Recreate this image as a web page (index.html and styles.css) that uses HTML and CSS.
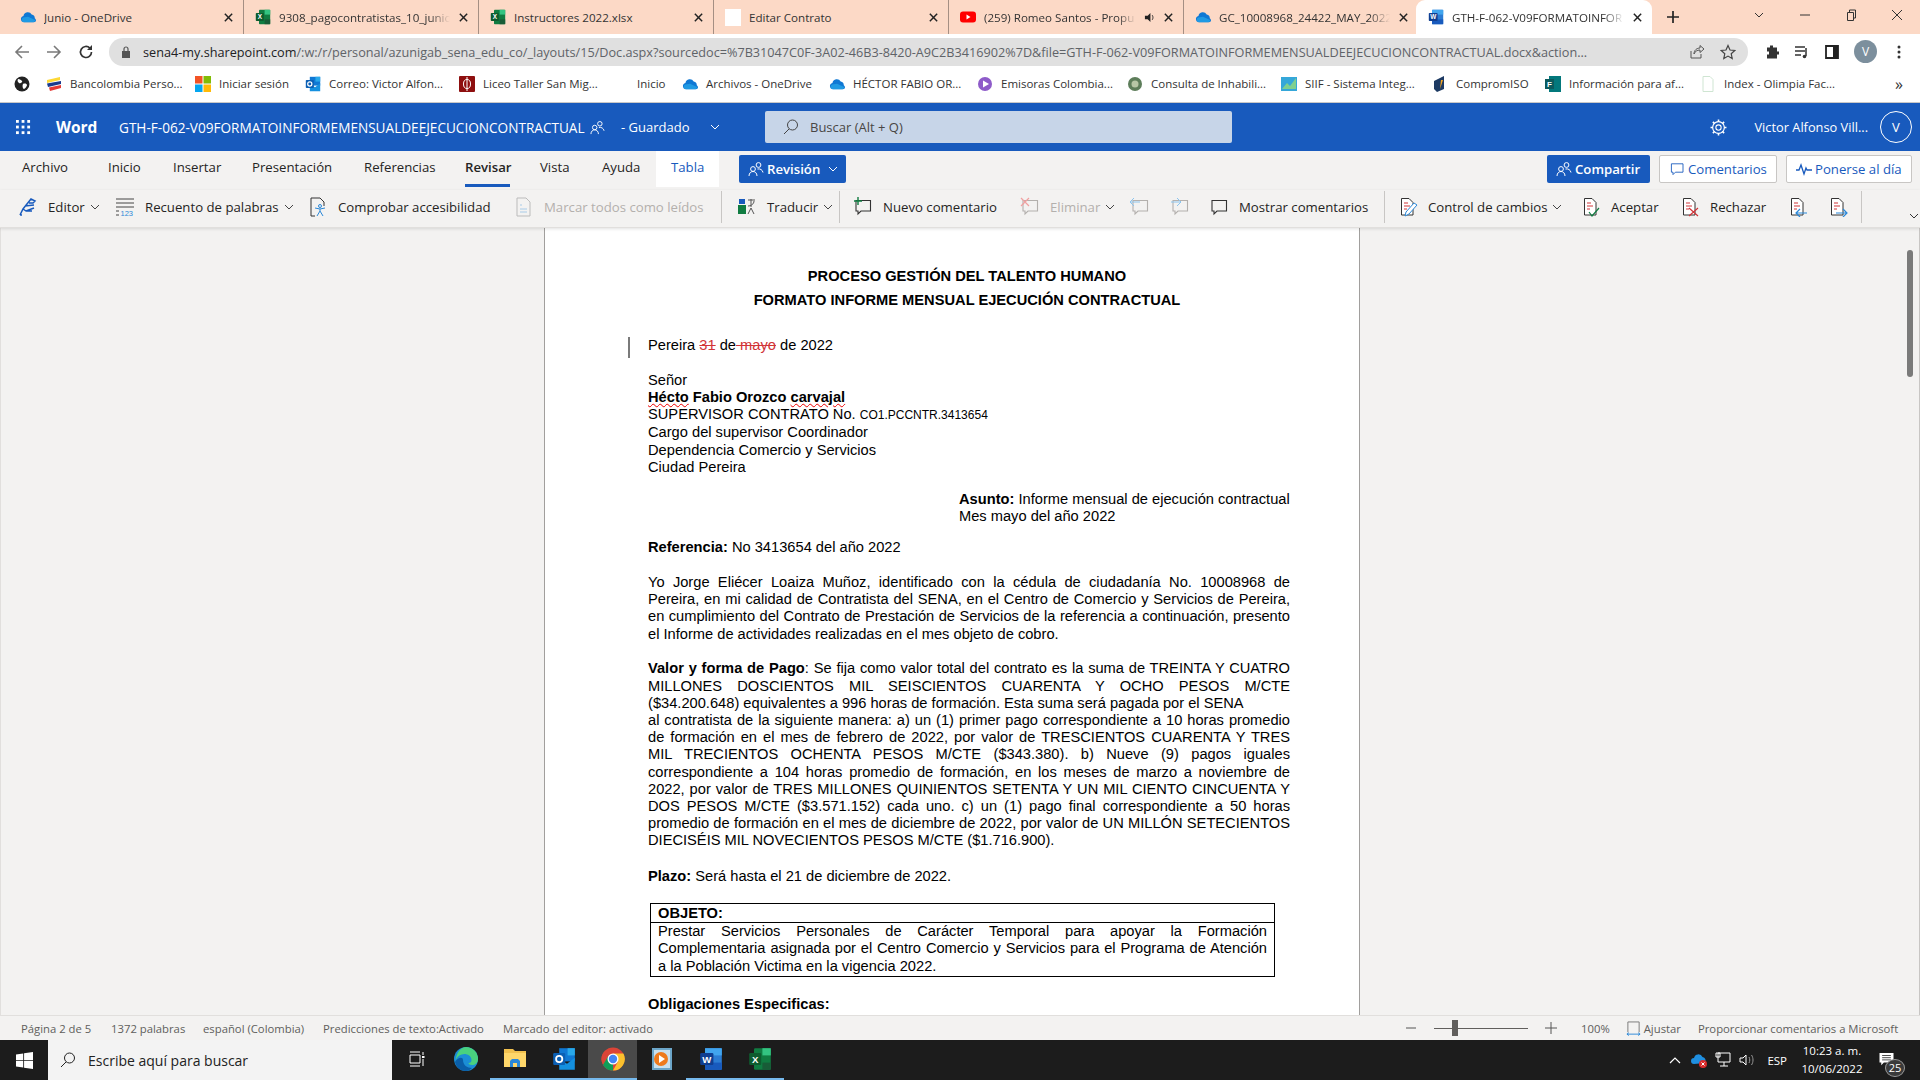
FILE: index.html
```html
<!DOCTYPE html>
<html lang="es">
<head>
    <meta charset="UTF-8">
    <title>GTH-F-062-V09FORMATOINFORMEMENSUALDEEJECUCIONCONTRACTUAL.docx</title>
    <link rel="stylesheet" href="styles.css">
</head>
<body>
    <svg class="defs" xmlns="http://www.w3.org/2000/svg">
        <symbol id="cloud" viewBox="0 0 20 20"><path fill="#0f78d4" d="M5 16.5a4 4 0 0 1-.7-7.9 5.5 5.5 0 0 1 10.3-1.6 4.6 4.6 0 0 1 3.9 4.6c1 .8 1.5 1.7 1.5 2.5 0 1.4-1.1 2.4-2.6 2.4z"/><path fill="#28a8ea" d="M5 16.5a3 3 0 0 1-1-5.8l6-1 9 4c0 1.6-1 2.8-2.6 2.8z" opacity=".7"/></symbol>
        <symbol id="excel" viewBox="0 0 20 20"><rect x="5" y="1" width="14" height="18" rx="1" fill="#107c41"/><rect x="12" y="1" width="7" height="6" fill="#33c481"/><rect x="12" y="13" width="7" height="6" fill="#185c37"/><rect x="1" y="5" width="10" height="10" rx="1" fill="#0e5c2f"/><text x="6" y="13" class="logo-letter">X</text></symbol>
        <symbol id="word" viewBox="0 0 20 20"><rect x="5" y="1" width="14" height="18" rx="1" fill="#2b7cd3"/><rect x="5" y="1" width="14" height="6" fill="#41a5ee"/><rect x="5" y="13" width="14" height="6" fill="#185abd"/><rect x="1" y="5" width="11" height="10" rx="1" fill="#103f91"/><text x="6.5" y="13" class="logo-letter">W</text></symbol>
        <symbol id="outlook" viewBox="0 0 20 20"><rect x="6" y="1" width="13" height="11" fill="#0f78d4"/><rect x="13" y="1" width="6" height="6" fill="#28a8ea"/><path fill="#1490df" d="M6 10l6.5 4L19 9v10H6z"/><rect x="1" y="5" width="10" height="10" rx="1" fill="#0a5fb4"/><circle cx="6" cy="10" r="2.6" fill="none" stroke="#fff" stroke-width="1.5"/></symbol>
        <symbol id="close" viewBox="0 0 12 12"><path d="M2 2l8 8M10 2l-8 8" stroke="#222" stroke-width="1.6" fill="none"/></symbol>
        <symbol id="chev" viewBox="0 0 12 12"><path d="M2 4l4 4 4-4" stroke="currentColor" stroke-width="1" fill="none"/></symbol>
        <symbol id="bubble" viewBox="0 0 20 20"><path d="M3 3.5h14.5v10.5H8l-3 3v-3H3z" fill="none" stroke="currentColor" stroke-width="1.1"/></symbol>
        <symbol id="people" viewBox="0 0 16 16"><circle cx="5" cy="8" r="2.4" fill="none" stroke="currentColor"/><path d="M1 15c0-3 2-4.500 4-4.500s4 1.500 4 4.500" fill="none" stroke="currentColor"/><circle cx="10.500" cy="4" r="2.400" fill="none" stroke="currentColor"/><path d="M9.500 8c2.500-.6 5 .8 5.500 3.500" fill="none" stroke="currentColor"/></symbol>
        <symbol id="page" viewBox="0 0 20 20"><path d="M3.500 1.500h7.500l4 4v12.500H3.500z" fill="#fff" stroke="#333" stroke-width="1"/><path d="M6 6h4M6 9h6M6 12h3" stroke="#d13438" stroke-width="1"/></symbol>
    </svg>

    <!-- chrome tabs -->
    <div class="tabstrip">
        <div class="tab"><svg class="ico16"><use href="#cloud"/></svg><span class="tab-name">Junio - OneDrive</span><svg class="tab-x"><use href="#close"/></svg></div>
        <div class="tab"><svg class="ico16"><use href="#excel"/></svg><span class="tab-name fade">9308_pagocontratistas_10_junio_</span><svg class="tab-x"><use href="#close"/></svg></div>
        <div class="tab"><svg class="ico16"><use href="#excel"/></svg><span class="tab-name">Instructores 2022.xlsx</span><svg class="tab-x"><use href="#close"/></svg></div>
        <div class="tab"><span class="blank-favicon"></span><span class="tab-name">Editar Contrato</span><svg class="tab-x"><use href="#close"/></svg></div>
        <div class="tab">
            <svg class="ico16" viewBox="0 0 16 16"><rect x="0" y="2.500" width="16" height="11" rx="3" fill="#f00"/><path d="M6.500 5.500l4 2.500-4 2.500z" fill="#fff"/></svg>
            <span class="tab-name fade">(259) Romeo Santos - Propu</span>
            <svg class="audio" viewBox="0 0 12 12"><path d="M1 4h3l3-3v10L4 8H1z" fill="#222"/><path d="M9 3.500c1 1.500 1 3.500 0 5" stroke="#222" fill="none"/></svg>
            <svg class="tab-x"><use href="#close"/></svg>
        </div>
        <div class="tab"><svg class="ico16"><use href="#cloud"/></svg><span class="tab-name fade">GC_10008968_24422_MAY_2022</span><svg class="tab-x"><use href="#close"/></svg></div>
        <div class="tab active"><svg class="ico16"><use href="#word"/></svg><span class="tab-name fade">GTH-F-062-V09FORMATOINFOR</span><svg class="tab-x"><use href="#close"/></svg></div>
        <svg class="new-tab" viewBox="0 0 14 14"><path d="M7 1v12M1 7h12" stroke="#222" stroke-width="1.700"/></svg>
        <div class="window-btns">
            <svg viewBox="0 0 12 12"><path d="M2 4l4 4 4-4" stroke="#333" fill="none"/></svg>
            <svg viewBox="0 0 12 12"><path d="M1 6h10" stroke="#333"/></svg>
            <svg viewBox="0 0 12 12"><path d="M2.500 3.500h6v8h-6zM4.500 3.500v-2.500h6v8h-2" fill="none" stroke="#333"/></svg>
            <svg viewBox="0 0 12 12"><path d="M1 1l10 10M11 1l-10 10" stroke="#333"/></svg>
        </div>
    </div>

    <!-- address bar -->
    <div class="addressbar">
        <svg class="nav" viewBox="0 0 16 16"><path d="M15 8H2M8 2L2 8l6 6" fill="none" stroke="#7a7a7a" stroke-width="1.600"/></svg>
        <svg class="nav" viewBox="0 0 16 16"><path d="M1 8h13M8 2l6 6-6 6" fill="none" stroke="#7a7a7a" stroke-width="1.600"/></svg>
        <svg class="nav" viewBox="0 0 16 16"><path d="M13.500 8a5.500 5.500 0 1 1-1.600-3.900" fill="none" stroke="#333" stroke-width="1.700"/><path d="M14 1v5H9z" fill="#333"/></svg>
        <div class="omnibox">
            <svg class="lock" viewBox="0 0 10 12"><path d="M1 5h8v7H1z" fill="#555"/><path d="M3 5V3a2 2 0 0 1 4 0v2" fill="none" stroke="#555" stroke-width="1.200"/></svg>
            <span class="url"><b>sena4-my.sharepoint.com</b>/:w:/r/personal/azunigab_sena_edu_co/_layouts/15/Doc.aspx?sourcedoc=%7B31047C0F-3A02-46B3-8420-A9C2B3416902%7D&amp;file=GTH-F-062-V09FORMATOINFORMEMENSUALDEEJECUCIONCONTRACTUAL.docx&amp;action...</span>
            <svg class="omni-ico" viewBox="0 0 16 16"><path d="M3 7v7h10v-4M6 10c0-4 3-6 6-6V1.500L16 5l-4 3.500V6c-3 0-5 1.500-6 4z" fill="none" stroke="#555"/></svg>
            <svg class="omni-ico" viewBox="0 0 16 16"><path d="M8 1.500l2 4.500 4.800.5-3.600 3.200 1 4.800L8 12.100 3.800 14.500l1-4.800L1.200 6.500 6 6z" fill="none" stroke="#444" stroke-width="1.200"/></svg>
        </div>
        <div class="ext-icons">
            <svg viewBox="0 0 16 16"><path d="M6 1.500h3v2h4v4h2v3h-2v4H3v-4h2v-3H3v-4h3z" fill="#333"/></svg>
            <svg viewBox="0 0 16 16"><path d="M1 3h10M1 7h10M1 11h6M12 4v8" stroke="#333" stroke-width="1.500" fill="none"/><circle cx="10.500" cy="12.500" r="1.800" fill="#333"/></svg>
            <svg viewBox="0 0 16 16"><path d="M2 2h12v12H2z" fill="none" stroke="#222" stroke-width="1.800"/><path d="M9 2h5v12H9z" fill="#222"/></svg>
            <span class="avatar-v">V</span>
            <svg viewBox="0 0 16 16"><circle cx="8" cy="3" r="1.500" fill="#333"/><circle cx="8" cy="8" r="1.500" fill="#333"/><circle cx="8" cy="13" r="1.500" fill="#333"/></svg>
        </div>
    </div>

    <!-- bookmarks -->
    <div class="bookmarks">
        <div class="bm"><svg class="ico16" viewBox="0 0 16 16"><circle cx="8" cy="8" r="7.500" fill="#222"/><path d="M4 3c2 0 3 1 4 2S6 8 5 7 3 5 4 3zM9 8c2-1 4 0 4 1s-2 4-3 4-2-3-1-5z" fill="#fff"/></svg></div>
        <div class="bm"><svg class="ico16" viewBox="0 0 16 16"><path d="M1 4l13-3v3L1 7z" fill="#fdd835"/><path d="M1 7.500L15 5v3L2 11z" fill="#1a3b8e"/><path d="M3 11.500L15 9v3L4 15z" fill="#e53935"/></svg><span>Bancolombia Perso...</span></div>
        <div class="bm"><svg class="ico16" viewBox="0 0 16 16"><rect width="7.500" height="7.500" fill="#f35325"/><rect x="8.500" width="7.500" height="7.500" fill="#81bc06"/><rect y="8.500" width="7.500" height="7.500" fill="#05a6f0"/><rect x="8.500" y="8.500" width="7.500" height="7.500" fill="#ffba08"/></svg><span>Iniciar sesión</span></div>
        <div class="bm"><svg class="ico16"><use href="#outlook"/></svg><span>Correo: Victor Alfon...</span></div>
        <div class="bm"><svg class="ico16" viewBox="0 0 16 16"><rect width="16" height="16" rx="1" fill="#8e0f0f"/><ellipse cx="8" cy="8" rx="3.500" ry="4.500" fill="none" stroke="#fff"/><path d="M8 1v14" stroke="#fff"/></svg><span>Liceo Taller San Mig...</span></div>
        <div class="bm"><span>Inicio</span></div>
        <div class="bm"><svg class="ico16"><use href="#cloud"/></svg><span>Archivos - OneDrive</span></div>
        <div class="bm"><svg class="ico16"><use href="#cloud"/></svg><span>HÉCTOR FABIO OR...</span></div>
        <div class="bm"><svg class="ico16" viewBox="0 0 16 16"><circle cx="8" cy="8" r="7" fill="#8e5bc9"/><path d="M6 4.500l6 3.500-6 3.500z" fill="#fff"/></svg><span>Emisoras Colombia...</span></div>
        <div class="bm"><svg class="ico16" viewBox="0 0 16 16"><circle cx="8" cy="8" r="7" fill="#5d7d5a"/><circle cx="8" cy="8" r="3.500" fill="#b7c6a6"/></svg><span>Consulta de Inhabili...</span></div>
        <div class="bm"><svg class="ico16" viewBox="0 0 16 16"><rect y="1" width="16" height="14" fill="#35a7d9"/><path d="M1 13l5-6 3 3 6-8v11H1z" fill="#7fd08f"/></svg><span>SIIF - Sistema Integ...</span></div>
        <div class="bm"><svg class="ico16" viewBox="0 0 16 16"><path d="M2 5l10-5v13l-7 3-3-3z" fill="#1d3a63"/><path d="M9 4l2 0-3 9z" fill="#f5a623"/></svg><span>CompromISO</span></div>
        <div class="bm"><svg class="ico16" viewBox="0 0 16 16"><rect x="4" width="12" height="16" fill="#03787c"/><rect y="3" width="9" height="10" fill="#0b5a5d"/><text x="4.500" y="11" class="logo-letter">F</text></svg><span>Información para af...</span></div>
        <div class="bm"><svg class="ico16" viewBox="0 0 16 16"><path d="M3 .500h7l3 3v12H3z" fill="#fff" stroke="#cfe5d2"/></svg><span>Index - Olimpia Fac...</span></div>
        <div class="bm more">»</div>
    </div>

    <!-- word online header -->
    <header class="appbar">
        <div class="appbar-left">
            <svg class="waffle" viewBox="0 0 16 16"><g fill="#fff"><rect x="0" y="0" width="3" height="3"/><rect x="6" y="0" width="3" height="3"/><rect x="12" y="0" width="3" height="3"/><rect x="0" y="6" width="3" height="3"/><rect x="6" y="6" width="3" height="3"/><rect x="12" y="6" width="3" height="3"/><rect x="0" y="12" width="3" height="3"/><rect x="6" y="12" width="3" height="3"/><rect x="12" y="12" width="3" height="3"/></g></svg>
            <span class="app-name">Word</span>
            <span class="doc-name">GTH-F-062-V09FORMATOINFORMEMENSUALDEEJECUCIONCONTRACTUAL</span>
            <svg class="people-ico"><use href="#people"/></svg>
            <span class="saved">- Guardado</span>
            <svg class="saved-chev"><use href="#chev"/></svg>
        </div>
        <div class="searchbox">
            <svg viewBox="0 0 16 16"><circle cx="9.500" cy="6" r="5" fill="none" stroke="#444"/><path d="M6 10l-5 5" stroke="#444"/></svg>
            <span>Buscar (Alt + Q)</span>
        </div>
        <div class="appbar-right">
            <svg class="gear" viewBox="0 0 16 16"><circle cx="8" cy="8" r="2.500" fill="none" stroke="#fff"/><circle cx="8" cy="8" r="5.500" fill="none" stroke="#fff" stroke-width="1.100"/><path d="M8 .500v2.300M8 13.200v2.300M.500 8h2.300M13.200 8h2.300M2.700 2.700l1.600 1.600M11.700 11.700l1.600 1.600M13.300 2.700l-1.600 1.600M4.300 11.700l-1.600 1.600" stroke="#fff" stroke-width="1.500"/></svg>
            <span class="user-name">Victor Alfonso Vill...</span>
            <span class="user-circle">V</span>
        </div>
    </header>

    <!-- ribbon -->
    <div class="ribbon-tabs">
        <nav class="tabs-grid">
            <span>Archivo</span>
            <span>Inicio</span>
            <span>Insertar</span>
            <span>Presentación</span>
            <span>Referencias</span>
            <span class="current">Revisar</span>
            <span>Vista</span>
            <span>Ayuda</span>
            <span class="context">Tabla</span>
            <button class="revision"><svg class="ico16"><use href="#people"/></svg>Revisión<svg class="btn-chev"><use href="#chev"/></svg></button>
        </nav>
        <div class="ribbon-actions">
            <button class="primary"><svg class="ico16"><use href="#people"/></svg>Compartir</button>
            <button class="outline"><svg class="ico16"><use href="#bubble"/></svg>Comentarios</button>
            <button class="outline"><svg class="ico16" viewBox="0 0 16 16"><path d="M0 9h3l2-5 3 9 2-6 1 2h5" fill="none" stroke="#185abd" stroke-width="1.300"/></svg>Ponerse al día</button>
        </div>
    </div>
    <div class="toolbar">
        <div class="tool"><svg viewBox="0 0 20 20"><path d="M2 18l3-6 8-10 4 2-2 2h-4M5 12l3 2 8-3M7 9l9-1M8 14l6 0M2 18h2" fill="none" stroke="#185abd" stroke-width="1.500"/></svg><span>Editor</span><svg class="caret"><use href="#chev"/></svg></div>
        <div class="tool"><svg viewBox="0 0 20 20"><path d="M1 2h18M1 6h18M1 10h18M1 14h3M1 18h3" stroke="#444"/><text x="5.500" y="18.500" class="num-mark">123</text></svg><span>Recuento de palabras</span><svg class="caret"><use href="#chev"/></svg></div>
        <div class="tool"><svg viewBox="0 0 20 20"><path d="M3 1h9l4 4v4M3 1v18h4" fill="none" stroke="#333"/><circle cx="12" cy="9" r="1.500" fill="none" stroke="#2b88d8"/><path d="M7 11l5 1 5-1M12 12v2l-3 5M12 14l3 5" fill="none" stroke="#2b88d8"/></svg><span>Comprobar accesibilidad</span></div>
        <div class="tool off"><svg viewBox="0 0 20 20"><path d="M3 1h9l4 4v14H3z" fill="none" stroke="#bbb"/><path d="M6 8h2M6 12h7M6 15h7" stroke="#a8cbe8"/></svg><span>Marcar todos como leídos</span></div>
        <span class="sep"></span>
        <div class="tool"><svg viewBox="0 0 20 20"><rect x="1" y="8" width="8" height="9" fill="#107c41"/><rect x="2" y="2" width="6" height="5" fill="#185abd"/><path d="M11 3h7M14 2v8M11 9c3 0 6-2 6-5M11 17l3-6 3 6" fill="none" stroke="#555"/></svg><span>Traducir</span><svg class="caret"><use href="#chev"/></svg></div>
        <span class="sep"></span>
        <div class="tool"><svg viewBox="0 0 20 20"><use href="#bubble"/><path d="M1 4h8M5 0v8" stroke="#107c41" stroke-width="1.400"/></svg><span>Nuevo comentario</span></div>
        <div class="tool off"><svg viewBox="0 0 20 20"><use href="#bubble"/><path d="M1 1l8 8M9 1l-8 8" stroke="#f0a0a0" stroke-width="1.200"/></svg><span>Eliminar</span><svg class="caret"><use href="#chev"/></svg></div>
        <div class="tool off"><svg viewBox="0 0 20 20"><use href="#bubble"/><path d="M0 5h10M4 1L0 5l4 4" fill="none" stroke="#8cc4ee"/></svg></div>
        <div class="tool off"><svg viewBox="0 0 20 20"><use href="#bubble"/><path d="M1 5h10M7 1l4 4-4 4" fill="none" stroke="#8cc4ee"/></svg></div>
        <div class="tool"><svg viewBox="0 0 20 20"><use href="#bubble"/></svg><span>Mostrar comentarios</span></div>
        <span class="sep"></span>
        <div class="tool"><svg viewBox="0 0 20 20"><use href="#page"/><path d="M7 19l1-4 8-9 3 2-8 9z" fill="#fff" stroke="#2b88d8"/></svg><span>Control de cambios</span><svg class="caret"><use href="#chev"/></svg></div>
        <div class="tool"><svg viewBox="0 0 20 20"><use href="#page"/><path d="M8 15l3 4 7-8" fill="none" stroke="#107c41" stroke-width="1.200"/></svg><span>Aceptar</span></div>
        <div class="tool"><svg viewBox="0 0 20 20"><use href="#page"/><path d="M9 11l9 8M18 11l-9 8" stroke="#d13438" stroke-width="1.200"/></svg><span>Rechazar</span></div>
        <div class="tool"><svg viewBox="0 0 20 20"><use href="#page"/><path d="M19 16H8M12 12l-4 4 4 4" fill="none" stroke="#2b88d8" stroke-width="1.200"/></svg></div>
        <div class="tool"><svg viewBox="0 0 20 20"><use href="#page"/><path d="M8 16h11M15 12l4 4-4 4" fill="none" stroke="#2b88d8" stroke-width="1.200"/></svg></div>
        <span class="sep"></span>
        <svg class="collapse"><use href="#chev"/></svg>
    </div>

    <!-- document -->
    <main class="workspace">
        <div class="side"></div>
        <article class="page">
            <h1>PROCESO GESTIÓN DEL TALENTO HUMANO</h1>
            <h1>FORMATO INFORME MENSUAL EJECUCIÓN CONTRACTUAL</h1>
            <p class="city">Pereira <del>31</del> de<del> mayo</del> de 2022</p>
            <p class="to">Señor<br>
                <b><span class="typo">Hécto</span> Fabio Orozco <span class="typo">carvajal</span></b><br>
                SUPERVISOR CONTRATO No. <small>CO1.PCCNTR.3413654</small><br>
                Cargo del supervisor Coordinador<br>
                Dependencia Comercio y Servicios<br>
                Ciudad Pereira</p>
            <p class="subject"><b>Asunto:</b> Informe mensual de ejecución contractual<br>Mes mayo del año 2022</p>
            <p class="ref"><b>Referencia:</b> No 3413654 del año 2022</p>
            <p class="body-text">Yo Jorge Eliécer Loaiza Muñoz, identificado con la cédula de ciudadanía No. 10008968 de Pereira, en mi calidad de Contratista del SENA, en el Centro de Comercio y Servicios de Pereira, en cumplimiento del Contrato de Prestación de Servicios de la referencia a continuación, presento el Informe de actividades realizadas en el mes objeto de cobro.</p>
            <p class="body-text"><b>Valor y forma de Pago</b>: Se fija como valor total del contrato es la suma de TREINTA Y CUATRO MILLONES DOSCIENTOS MIL SEISCIENTOS CUARENTA Y OCHO PESOS M/CTE ($34.200.648) equivalentes a 996 horas de formación. Esta suma será pagada por el SENA
                <span class="ln">al contratista de la siguiente manera: a) un (1) primer pago correspondiente a 10 horas promedio</span>
                <span class="ln">de formación en el mes de febrero de 2022, por valor de TRESCIENTOS CUARENTA Y TRES</span>
                <span class="ln">MIL TRECIENTOS OCHENTA PESOS M/CTE ($343.380). b) Nueve (9) pagos iguales</span>
                <span class="ln">correspondiente a 104 horas promedio de formación, en los meses de marzo a noviembre de</span>
                <span class="ln">2022, por valor de TRES MILLONES QUINIENTOS SETENTA Y UN MIL CIENTO CINCUENTA Y</span>
                <span class="ln">DOS PESOS M/CTE ($3.571.152) cada uno. c) un (1) pago final correspondiente a 50 horas</span>
                <span class="ln">promedio de formación en el mes de diciembre de 2022, por valor de UN MILLÓN SETECIENTOS</span>
                <span class="ln last">DIECISÉIS MIL NOVECIENTOS PESOS M/CTE ($1.716.900).</span></p>
            <p class="body-text term"><b>Plazo:</b> Será hasta el 21 de diciembre de 2022.</p>
            <table class="object">
                <tr><th>OBJETO:</th></tr>
                <tr><td>Prestar Servicios Personales de Carácter Temporal para apoyar la Formación Complementaria asignada por el Centro Comercio y Servicios para el Programa de Atención a la Población Victima en la vigencia 2022.</td></tr>
            </table>
            <p class="duties"><b>Obligaciones Especificas:</b></p>
        </article>
        <div class="side side-right"><span class="thumb"></span></div>
    </main>

    <!-- status bar -->
    <footer class="statusbar">
        <span>Página 2 de 5</span>
        <span>1372 palabras</span>
        <span>español (Colombia)</span>
        <span>Predicciones de texto:Activado</span>
        <span>Marcado del editor: activado</span>
        <div class="zoom">
            <svg class="z-minus" viewBox="0 0 12 12"><path d="M1 6h10" stroke="#555"/></svg>
            <div class="slider"><span class="slider-thumb"></span></div>
            <svg class="z-plus" viewBox="0 0 12 12"><path d="M0 6h12M6 0v12" stroke="#555"/></svg>
            <span class="z-pct">100%</span>
            <svg class="z-fit" viewBox="0 0 16 16"><path d="M2 12V1h12v11" fill="none" stroke="#777"/><path d="M1 14h14M3 12.500L1 14l2 1.500M13 12.500l2 1.500-2 1.500" fill="none" stroke="#2b88d8"/></svg>
            <span class="z-fit-label">Ajustar</span>
            <span class="z-feedback">Proporcionar comentarios a Microsoft</span>
        </div>
    </footer>

    <!-- windows taskbar -->
    <div class="taskbar">
        <div class="start"><svg viewBox="0 0 16 16"><path d="M0 2.300L6.800 1.300v6.200H0zM7.600 1.200L16 0v7.500H7.600zM0 8.300h6.800v6.300L0 13.700zM7.600 8.300H16V16l-8.400-1.200z" fill="#fff"/></svg></div>
        <div class="win-search">
            <svg viewBox="0 0 16 16"><circle cx="9.500" cy="6" r="5" fill="none" stroke="#222"/><path d="M6 10l-5 5" stroke="#222"/></svg>
            <span>Escribe aquí para buscar</span>
        </div>
        <div class="pin"><svg viewBox="0 0 16 16"><path d="M1 1h10M1 15h10M1 4h10v8H1zM14 1v3M14 8v7" fill="none" stroke="#fff"/><rect x="13" y="5" width="2.500" height="2" fill="#fff"/></svg></div>
        <div class="pin"><svg class="big" viewBox="0 0 24 24"><circle cx="12" cy="12" r="12" fill="#1b8ed6"/><path d="M12 0a12 12 0 0 1 12 12c0 4-3 6-6 6-2 0-3.500-1-3.500-2 2 0 3-1 3-3 0-4-4-6-7-6-4 0-7 2-9 6C3 5 7 0 12 0z" fill="#49d17f"/><path d="M9 13c0 5 4 8 9 8-2 2-4 3-6 3C6 24 2 20 1 15c2-4 8-6 8-2z" fill="#0a5ea8"/></svg></div>
        <div class="pin open"><svg class="big" viewBox="0 0 24 24"><path d="M1 2h9l2 2h11v15H1z" fill="#f2c14e"/><rect x="1" y="6" width="22" height="14" fill="#ffd76a"/><path d="M7 20v-6l2-2h6l2 2v6h-3v-4h-4v4z" fill="#2b88d8"/></svg></div>
        <div class="pin open"><svg class="big"><use href="#outlook"/></svg></div>
        <div class="pin open active"><svg class="big" viewBox="0 0 24 24"><circle cx="12" cy="12" r="11.500" fill="#db4437"/><path d="M12 12L2.200 18A11.500 11.500 0 0 1 2 6.500z" fill="#db4437"/><path d="M12 23.500A11.500 11.500 0 0 1 2 18l5-8.500 5 8z" fill="#0f9d58"/><path d="M12 6.500h10.400A11.500 11.500 0 0 1 12 23.500l5-9z" fill="#fbc02d"/><circle cx="12" cy="12" r="5.500" fill="#fff"/><circle cx="12" cy="12" r="4.200" fill="#4285f4"/></svg></div>
        <div class="pin"><svg class="big" viewBox="0 0 24 24"><rect x="2" y="1" width="20" height="22" fill="#6ca6c9"/><rect x="4" y="3" width="16" height="18" fill="#c9e0ee"/><circle cx="11" cy="12" r="7" fill="#ee7a1c"/><path d="M9 8l6 4-6 4z" fill="#fff"/></svg></div>
        <div class="pin open"><svg class="big"><use href="#word"/></svg></div>
        <div class="pin open"><svg class="big"><use href="#excel"/></svg></div>
        <div class="tray">
            <svg class="tray-caret" viewBox="0 0 12 8"><path d="M1 7l5-5 5 5" fill="none" stroke="#fff" stroke-width="1.200"/></svg>
            <svg class="tray-ico" viewBox="0 0 16 16"><path d="M3 12a3 3 0 0 1 0-6 4.500 4.500 0 0 1 8.500-1 3.500 3.500 0 0 1 2 6z" fill="#1f8fe0"/><circle cx="12" cy="12" r="4" fill="#d92b2b"/><path d="M10.500 10.500l3 3M13.500 10.500l-3 3" stroke="#fff"/></svg>
            <svg class="tray-ico" viewBox="0 0 16 16"><path d="M3 1h12v9H3zM1 1h4v4H1zM9 10v4M5 14h8" fill="#1c1c1c" stroke="#fff"/></svg>
            <svg class="tray-ico" viewBox="0 0 16 16"><path d="M1 6h3l3-3v10l-3-3H1z" fill="none" stroke="#fff"/><path d="M10 5c1 2 1 4 0 6M12.500 3c2 3 2 7 0 10" fill="none" stroke="#999"/></svg>
            <span class="lang">ESP</span>
            <span class="clock">10:23 a. m.<br>10/06/2022</span>
            <div class="notif"><svg viewBox="0 0 16 16"><path d="M0 1h16v11H5l-3 3v-3H0z" fill="#fff"/><path d="M3 4h10M3 6.500h10M3 9h10" stroke="#333"/></svg><span class="badge">25</span></div>
        </div>
    </div>
</body>
</html>
```

FILE: styles.css
```css
* {
    box-sizing: border-box;
}

html, body {
    margin: 0;
    height: 100%;
}

body {
    width: 1920px;
    height: 1080px;
    overflow: hidden;
    display: flex;
    flex-direction: column;
    font-family: "Open Sans", "Liberation Sans", sans-serif;
    color: #252423;
    background: #f3f2f1;
}

svg {
    flex: none;
}

.defs {
    display: none;
}

.logo-letter {
    font-family: "Liberation Sans", sans-serif;
    font-size: 8px;
    font-weight: 700;
    fill: #fff;
    text-anchor: middle;
}

.ico16 {
    width: 16px;
    height: 16px;
}

/* chrome tabs */
.tabstrip {
    height: 34px;
    padding-left: 9px;
    display: flex;
    background: #fcd9c6;
}

.tab {
    width: 235px;
    padding: 0 9px 0 11px;
    display: flex;
    align-items: center;
    gap: 8px;
    font-size: 11.600px;
    color: #333;
    border-right: 1px solid #a58f83;
}

.tab:nth-child(6),
.tab:nth-child(7) {
    border-right-color: transparent;
}

.tab-name {
    flex: 1;
    overflow: hidden;
    white-space: nowrap;
}

.tab-name.fade {
    -webkit-mask-image: linear-gradient(90deg, #000 88%, transparent);
    mask-image: linear-gradient(90deg, #000 88%, transparent);
}

.tab-x {
    width: 11px;
    height: 11px;
}

.audio {
    width: 11px;
    height: 11px;
}

.blank-favicon {
    width: 16px;
    height: 17px;
    background: #fff;
}

.tab.active {
    background: #fff;
    border-radius: 9px 9px 0 0;
    border: 0;
    margin-left: -3px;
    width: 236px;
    padding-left: 12px;
}

.new-tab {
    width: 14px;
    height: 14px;
    margin: 10px 0 0 14px;
}

.window-btns {
    display: flex;
    margin-left: 73px;
    gap: 34px;
    padding-top: 9px;
}

.window-btns svg {
    width: 12px;
    height: 12px;
}

/* address bar */
.addressbar {
    height: 34px;
    padding: 1px 0 0 14px;
    display: flex;
    align-items: center;
    background: #fff;
    gap: 16px;
}

.nav {
    width: 16px;
    height: 16px;
}

.omnibox {
    width: 1639px;
    height: 28px;
    margin-left: -1px;
    padding: 0 12px;
    border-radius: 14px;
    background: #e0e0e0;
    display: flex;
    align-items: center;
    gap: 12px;
}

.lock {
    width: 10px;
    height: 12px;
}

.url {
    flex: 1;
    font-size: 12.680px;
    color: #5f6368;
    white-space: nowrap;
    overflow: hidden;
}

.url b {
    font-weight: 400;
    color: #202124;
}

.omni-ico {
    width: 16px;
    height: 16px;
    margin-left: 4px;
}

.ext-icons {
    display: flex;
    align-items: center;
    gap: 14px;
}

.ext-icons svg {
    width: 16px;
    height: 16px;
}

.avatar-v {
    width: 23px;
    height: 23px;
    border-radius: 50%;
    background: #7c8f9d;
    color: #fff;
    font-size: 12px;
    display: flex;
    align-items: center;
    justify-content: center;
}

/* bookmarks */
.bookmarks {
    height: 35px;
    padding: 0 0 3px 14px;
    display: grid;
    grid-template-columns: 32px 149px 110px 154px 178px 45px 147px 148px 150px 154px 151px 113px 155px 195px auto;
    align-items: center;
    background: #fff;
    border-bottom: 1px solid #c8c8c8;
    font-size: 11.500px;
    color: #333;
}

.bm {
    display: flex;
    align-items: center;
    gap: 8px;
    white-space: nowrap;
}

.bm.more {
    font-size: 16px;
}

/* word header */
.appbar {
    height: 48px;
    display: grid;
    grid-template-columns: 765px 467px 1fr;
    align-items: center;
    background: #185abd;
    color: #fff;
}

.appbar-left {
    display: flex;
    align-items: center;
    padding-left: 16px;
}

.waffle {
    width: 15px;
    height: 15px;
}

.app-name {
    margin-left: 25px;
    font-size: 15.500px;
    font-weight: 700;
    width: 63px;
}

.doc-name {
    font-size: 13.600px;
    width: 471px;
    white-space: nowrap;
}

.people-ico {
    width: 15px;
    height: 15px;
}

.saved {
    margin-left: 16px;
    font-size: 13px;
}

.saved-chev {
    width: 12px;
    height: 12px;
    margin-left: 20px;
}

.searchbox {
    height: 32px;
    border-radius: 2px;
    background: #c7d5e8;
    display: flex;
    align-items: center;
    gap: 11px;
    padding-left: 18px;
    color: #484644;
    font-size: 13px;
}

.searchbox svg {
    width: 16px;
    height: 16px;
}

.appbar-right {
    display: flex;
    align-items: center;
    justify-content: flex-end;
    padding-right: 8px;
}

.gear {
    width: 17px;
    height: 17px;
    margin-right: 27px;
}

.user-name {
    font-size: 12.800px;
    margin-right: 12px;
}

.user-circle {
    width: 32px;
    height: 32px;
    border: 1px solid #fff;
    border-radius: 50%;
    display: flex;
    align-items: center;
    justify-content: center;
    font-size: 13px;
}

/* ribbon */
.ribbon-tabs {
    height: 39px;
    display: flex;
    justify-content: space-between;
    background: #f3f2f1;
    font-size: 13.200px;
}

.tabs-grid {
    padding-left: 22px;
    display: grid;
    grid-template-columns: 86px 65px 79px 112px 101px 75px 62px 54px 83px 107px;
    height: 31px;
}

.tabs-grid > span {
    line-height: 33px;
    white-space: nowrap;
}

.tabs-grid .current {
    width: 45px;
    font-weight: 600;
    border-bottom: 3px solid #185abd;
}

.tabs-grid .context {
    background: #fff;
    width: 63px;
    padding-left: 15px;
    color: #185abd;
}

button {
    font: inherit;
    height: 28px;
    margin-top: 4px;
    display: flex;
    align-items: center;
    gap: 3px;
    border-radius: 2px;
    padding: 0 0 0 9px;
    white-space: nowrap;
}

.revision,
.primary {
    background: #185abd;
    border: 0;
    color: #fff;
    font-weight: 600;
}

.revision {
    width: 107px;
}

.btn-chev {
    width: 12px;
    height: 12px;
    margin-left: 4px;
}

.ribbon-actions {
    display: flex;
    gap: 9px;
    padding-right: 8px;
}

.primary {
    width: 103px;
}

.outline {
    background: #fff;
    border: 1px solid #c8c6c4;
    color: #185abd;
}

.outline:nth-child(2) {
    width: 118px;
}

.outline:nth-child(3) {
    width: 126px;
}

.toolbar {
    height: 38px;
    padding: 1px 0 4px 18px;
    display: grid;
    grid-template-columns: 97px 193px 206px 207px 16px 102px 14px 167px 110px 40px 39px 175px 14px 183px 99px 108px 40px 33px 47px auto;
    align-items: center;
    background: #f3f2f1;
    border-bottom: 1px solid #e1dfdd;
    box-shadow: 0 1px 3px rgba(0, 0, 0, 0.12);
    font-size: 13.200px;
    position: relative;
}

.tool {
    display: flex;
    align-items: center;
    gap: 10px;
    white-space: nowrap;
}

.tool svg:first-child {
    width: 20px;
    height: 20px;
    color: #333;
}

.tool .caret {
    width: 12px;
    height: 12px;
    margin-left: -6px;
    color: #444;
}

.num-mark {
    font-family: "Liberation Sans", sans-serif;
    font-size: 7.500px;
    fill: #2b88d8;
}

.tool.off {
    color: #b3b0ad;
}

.tool.off svg:first-child {
    color: #b3b0ad;
}

.sep {
    width: 1px;
    height: 32px;
    background: #c8c6c4;
}

.collapse {
    width: 12px;
    height: 12px;
    margin-top: 18px;
    color: #333;
}

/* document */
.workspace {
    flex: 1;
    min-height: 0;
    display: flex;
    overflow: hidden;
}

.side {
    width: 544px;
    background: #f3f2f1;
    border-left: 1px solid #e1dfdd;
}

.side-right {
    flex: 1;
    display: flex;
    justify-content: flex-end;
    padding: 22px 6px 0 0;
    border-left: 0;
    border-right: 1px solid #c8c6c4;
}

.thumb {
    width: 6px;
    height: 127px;
    border-radius: 3px;
    background: #7a7a7a;
}

.page {
    width: 816px;
    padding: 36px 69px 0 103px;
    background: #fff;
    border-left: 1px solid #a19f9d;
    border-right: 1px solid #a19f9d;
    color: #000;
    font-family: "Liberation Sans", Arial, sans-serif;
    font-size: 14.670px;
    line-height: 17.200px;
    overflow: hidden;
}

.page h1 {
    margin: 0 0 0 -4px;
    font-size: 14.670px;
    line-height: 24px;
    text-align: center;
}

.page p {
    margin: 0;
}

.page .city {
    margin-top: 25px;
    position: relative;
}

/* change bar in the margin */
.page .city::before {
    content: "";
    position: absolute;
    left: -20px;
    top: 0;
    width: 2px;
    height: 21px;
    background: #7a7a7a;
}

.page del {
    color: #d13438;
}

.page .to {
    margin-top: 17.500px;
}

.page small {
    font-size: 12px;
}

.typo {
    text-decoration: underline wavy #e00;
    text-decoration-thickness: 1px;
}

.page .subject {
    margin: 15px 0 0 311px;
    white-space: nowrap;
}

.page .ref {
    margin-top: 14px;
}

.page .body-text {
    margin-top: 17.500px;
    text-align: justify;
}

.page .term {
    margin-top: 18.500px;
}

/* lines that wrap as they do in the document */
.ln {
    display: block;
    white-space: nowrap;
    text-align: justify;
    text-align-last: justify;
    white-space: normal;
}

.ln.last {
    text-align-last: left;
}

.object {
    width: 625px;
    margin: 18px 0 0 2px;
    border-collapse: collapse;
    font-size: 14.670px;
    line-height: 17.200px;
}

.object th,
.object td {
    border: 1px solid #000;
    padding: 0 7px;
    text-align: justify;
}

.object th {
    height: 19px;
    text-align: left;
}

.object td {
    padding-bottom: 1px;
}

.page .duties {
    margin-top: 19px;
}

/* status bar */
.statusbar {
    height: 25px;
    flex: none;
    display: grid;
    grid-template-columns: 90px 92px 120px 180px 1fr 515px;
    padding-left: 21px;
    align-items: center;
    background: #f3f2f1;
    border-top: 1px solid #e1dfdd;
    font-size: 11.300px;
    color: #605e5c;
    white-space: nowrap;
}

.zoom {
    grid-column: 6;
    display: flex;
    align-items: center;
}

.z-minus {
    width: 12px;
    height: 12px;
}

.slider {
    width: 94px;
    height: 1px;
    margin-left: 17px;
    background: #605e5c;
    display: flex;
    align-items: center;
    padding-left: 18px;
}

.slider-thumb {
    width: 6px;
    height: 16px;
    background: #605e5c;
}

.z-plus {
    width: 12px;
    height: 12px;
    margin-left: 17px;
}

.z-pct {
    margin-left: 24px;
}

.z-fit {
    width: 15px;
    height: 15px;
    margin-left: 16px;
}

.z-fit-label {
    margin-left: 3px;
}

.z-feedback {
    margin-left: 17px;
}

/* taskbar */
.taskbar {
    height: 40px;
    flex: none;
    display: flex;
    background: #1c1c1c;
    color: #fff;
}

.start {
    width: 48px;
    display: flex;
    align-items: center;
    justify-content: center;
}

.start svg {
    width: 17px;
    height: 17px;
}

.win-search {
    width: 344px;
    display: flex;
    align-items: center;
    gap: 12px;
    padding-left: 12px;
    background: #f3f3f3;
    color: #222;
    font-size: 14px;
}

.win-search svg {
    width: 16px;
    height: 16px;
}

.pin {
    width: 49px;
    display: flex;
    align-items: center;
    justify-content: center;
    border-bottom: 2px solid transparent;
}

.pin svg {
    width: 16px;
    height: 16px;
}

.pin svg.big {
    width: 24px;
    height: 24px;
}

.pin.open {
    border-bottom-color: #76b9ed;
}

.pin.active {
    background: #4a4a4a;
}

.tray {
    flex: 1;
    display: flex;
    align-items: center;
    justify-content: flex-end;
    padding-right: 14px;
    font-size: 11.500px;
}

.tray-caret {
    width: 12px;
    height: 8px;
    margin-right: 10px;
}

.tray-ico {
    width: 16px;
    height: 16px;
    margin-right: 8px;
}

.lang {
    margin: 0 7px 0 4px;
}

.clock {
    width: 76px;
    text-align: center;
    line-height: 18px;
}

.notif {
    width: 36px;
    height: 40px;
    padding: 12px 0 0 9px;
    position: relative;
}

.notif svg {
    width: 15px;
    height: 14px;
}

.badge {
    position: absolute;
    right: 1px;
    bottom: 3px;
    width: 20px;
    height: 18px;
    border-radius: 50%;
    background: #3a3a3a;
    border: 1px solid #999;
    font-size: 11px;
    line-height: 16px;
    text-align: center;
}
```
